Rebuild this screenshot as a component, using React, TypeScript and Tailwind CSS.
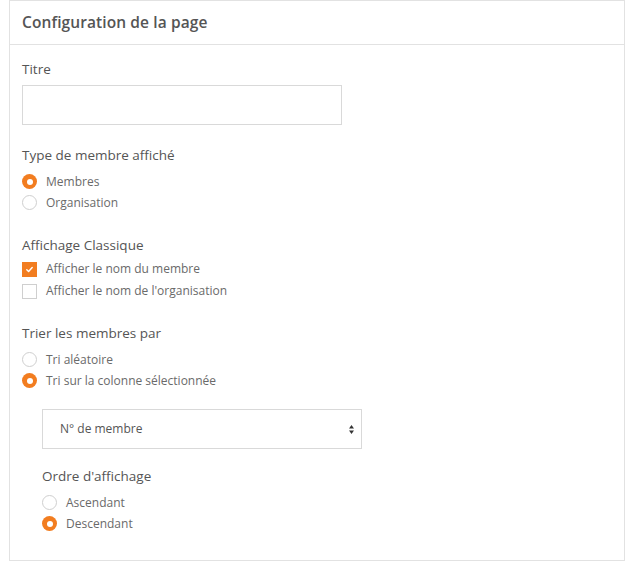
function Radio({ checked, label }: { checked?: boolean; label: string }) {
  return (
    <div className="flex items-center h-[21px] gap-[9px]">
      {checked ? (
        <span className="w-[15px] h-[15px] rounded-full bg-[#f27d20] flex items-center justify-center">
          <span className="w-[6px] h-[6px] rounded-full bg-white" />
        </span>
      ) : (
        <span className="w-[15px] h-[15px] rounded-full border border-[#cfcfcf] bg-white" />
      )}
      <span className="text-[12px] text-[#6a6a6a]">{label}</span>
    </div>
  );
}

function Checkbox({ checked, label }: { checked?: boolean; label: string }) {
  return (
    <div className="flex items-center h-[22px] gap-[9px]">
      {checked ? (
        <span className="w-[15px] h-[15px] bg-[#f27d20] flex items-center justify-center">
          <svg width="9" height="9" viewBox="0 0 10 10" fill="none">
            <path d="M2 5.2l2 2 4-4.4" stroke="white" strokeWidth="1.6" strokeLinecap="round" strokeLinejoin="round" />
          </svg>
        </span>
      ) : (
        <span className="w-[15px] h-[15px] border border-[#cfcfcf] bg-white" />
      )}
      <span className="text-[12px] text-[#6a6a6a]">{label}</span>
    </div>
  );
}

function Heading({ children, className = 'mb-[6px]' }: { children: string; className?: string }) {
  return <div className={`h-[20px] leading-[20px] text-[13.5px] text-[#555] ${className}`}>{children}</div>;
}

export default function App() {
  return (
    <div className="bg-white w-[634px] h-[568px]" style={{ fontFamily: '"Open Sans", "Noto Sans", sans-serif' }}>
      <div className="ml-[9px] w-[616px] border border-[#e2e2e2]">
        <div className="h-[44px] border-b border-[#e2e2e2] px-[12px] flex items-center">
          <h1 className="text-[15.5px] font-semibold text-[#555] tracking-[0.1px]">Configuration de la page</h1>
        </div>
        <div className="px-[12px] pt-[14px] pb-[26px]">
          <Heading>Titre</Heading>
          <input className="block w-[320px] h-[40px] border border-[#d9d9d9] outline-none px-3" />

          <div className="mt-[20px]">
            <Heading>Type de membre affiché</Heading>
            <Radio checked label="Membres" />
            <Radio label="Organisation" />
          </div>

          <div className="mt-[22px]">
            <Heading className="mb-[3px]">Affichage Classique</Heading>
            <Checkbox checked label="Afficher le nom du membre" />
            <Checkbox label="Afficher le nom de l'organisation" />
          </div>

          <div className="mt-[21px]">
            <Heading>Trier les membres par</Heading>
            <Radio label="Tri aléatoire" />
            <Radio checked label="Tri sur la colonne sélectionnée" />
          </div>

          <div className="ml-[20px] mt-[18px]">
            <div className="w-[320px] h-[40px] border border-[#d9d9d9] flex items-center justify-between pl-[17px] pr-[7px]">
              <span className="text-[12px] text-[#555]">N° de membre</span>
              <svg width="5" height="9" viewBox="0 0 5 9">
                <path d="M2.5 0L5 3.5H0z" fill="#333" />
                <path d="M0 5.5h5L2.5 9z" fill="#333" />
              </svg>
            </div>
            <div className="mt-[17px]">
              <Heading>Ordre d'affichage</Heading>
              <Radio label="Ascendant" />
              <Radio checked label="Descendant" />
            </div>
          </div>
        </div>
      </div>
    </div>
  );
}
